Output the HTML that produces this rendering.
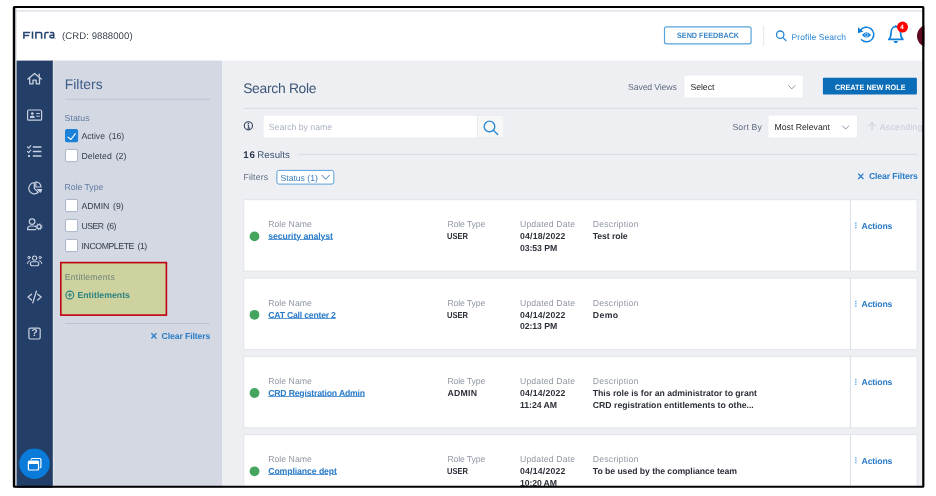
<!DOCTYPE html>
<html>
<head>
<meta charset="utf-8">
<title>Search Role</title>
<style>
*{box-sizing:border-box;margin:0;padding:0}
html,body{width:936px;height:496px;overflow:hidden;background:#fff;font-family:"Liberation Sans",sans-serif}
#page{position:absolute;left:0;top:0;width:936px;height:496px;overflow:hidden}
.layer{position:absolute;left:0;top:0;display:block}
.t{position:absolute;white-space:nowrap;line-height:1;text-rendering:geometricPrecision}
#texts{position:absolute;left:0;top:0;width:936px;height:496px;will-change:transform}
</style>
</head>
<body>
<div id="page">
<svg class="layer" width="936" height="496" viewBox="0 0 936 496">
  <!-- backgrounds -->
  <rect x="15" y="8" width="908" height="52.6" fill="#fff"/>
  <rect x="16.5" y="10" width="906" height="1.9" fill="#e6e8ee"/>
  <rect x="222" y="60.6" width="702" height="428" fill="#edeff3"/>
  <rect x="52.2" y="60.6" width="169.8" height="428" fill="#d3d8e2"/>
  <rect x="52.5" y="60.6" width="1.8" height="428" fill="#dde1e9"/>
  <rect x="16.4" y="60.6" width="36.1" height="428" fill="#233e67"/>
  <rect x="51.5" y="60.6" width="1" height="428" fill="#1f3862"/>
  <rect x="15" y="8" width="1.4" height="480" fill="#c2c6ce"/>

  <!-- logo FINra -->
  <g fill="none" stroke="#27446f" stroke-width="1.55" stroke-linejoin="miter">
    <path d="M23.9 38.7V32.4H30.2M23.9 35.5H29.2"/>
    <path d="M32.5 31.5V38.7"/>
    <path d="M35.9 38.7V32.4H40.2Q41.6 32.4 41.6 33.8V38.7"/>
    <path d="M44.9 38.7V33.8Q44.9 32.4 46.3 32.4H48.8"/>
    <path d="M50 32.4H52.3Q53.7 32.4 53.7 33.8V37.8H51.2Q49.9 37.8 49.9 36.5Q49.9 35.2 51.2 35.2H53.7"/>
  </g>

  <circle cx="55.6" cy="38.5" r=".45" fill="#6c7f9e"/>
  <!-- header: send feedback, divider, search icon, history, bell, avatar -->
  <rect x="664.5" y="26.8" width="86.6" height="17" rx="2" fill="#fff" stroke="#5aa3da" stroke-width="1.2"/>
  <rect x="763.2" y="25.3" width="1" height="20.8" fill="#e2e5ea"/>
  <g fill="none" stroke="#2a86d3" stroke-width="1.3" stroke-linecap="round">
    <circle cx="780.2" cy="34.7" r="3.7"/><path d="M783 37.6L786 40.5"/>
  </g>
  <g fill="none" stroke="#0f7fda" stroke-width="1.5" stroke-linecap="round">
    <path d="M860.3 30.6A7.3 7.3 0 1 1 861.5 39.8"/>
  </g>
  <path d="M858 27.2V33.3L863.4 31.4Z" fill="#0f7fda"/>
  <path d="M861.9 34.9Q866.5 29.6 871.1 34.9Q866.5 40.2 861.9 34.9Z" fill="#0f7fda"/>
  <circle cx="866.5" cy="34.9" r="1.6" fill="none" stroke="#fff" stroke-width=".6"/>
  <g fill="none" stroke="#0f7fda" stroke-width="1.7" stroke-linejoin="round" stroke-linecap="round">
    <path d="M888.8 39.4C890.7 37.8 891 36 891 33C891 29.4 893 26.7 895.8 26.7C898.6 26.7 900.6 29.4 900.6 33C900.6 36 901 37.8 902.9 39.4Z"/>
    <path d="M894.2 41.7Q895.8 43.3 897.4 41.7Z" fill="#0f7fda" stroke-width="1.2"/>
    <path d="M895.8 26.4V25.8" stroke-width="1.6"/>
  </g>
  <circle cx="902.5" cy="27.1" r="5.5" fill="#ff0000"/>
  <circle cx="928.25" cy="36" r="11.25" fill="#5e0a1f"/>

  <!-- sidebar icons -->
  <g fill="none" stroke="#c9d1e0" stroke-width="1.3" stroke-linecap="round" stroke-linejoin="round">
    <!-- home -->
    <path d="M27.9 79.1L34.6 73.4L41.3 79.1"/>
    <path d="M29.7 78.2V83.8H33V80.2H36.2V83.8H39.5V78.2"/>
    <path d="M39.2 76.2V74.2"/>
    <!-- id card -->
    <rect x="27.6" y="110" width="14" height="10.2" rx="1.3" stroke-width="1.2"/>
    <path d="M36.6 113.5H39.4M36.6 116.2H39.4" stroke-width="1"/>
    <!-- checklist -->
    <path d="M32.8 147H41.4M32.8 151.5H41.4M32.8 156H41.4" stroke-width="1.6" stroke-linecap="butt"/>
    <path d="M27.4 146.9L28.6 148.1L30.8 145.6M27.4 151.4L28.6 152.6L30.8 150.1" stroke-width="1.1"/>
    <!-- pie -->
    <path d="M34.3 182.7A5.6 5.6 0 1 0 38.3 192.3L34.3 188.3Z" stroke-width="1.2"/>
    <path d="M35.8 181.8A5.2 5.2 0 0 1 41 187H35.8Z" stroke-width="1.2"/>
    <!-- user gear -->
    <circle cx="32.1" cy="221.6" r="2.8" stroke-width="1.2"/>
    <path d="M35.6 229.7H27.6V228.9Q27.6 226 30.6 226H33.4Q35 226 35.9 226.8" stroke-width="1.2"/>
    <circle cx="39" cy="226.7" r="2.1" stroke-width="1.4"/>
    <circle cx="39" cy="226.7" r="3.1" stroke-width=".9" stroke-dasharray="1.05 1.385" stroke-linecap="butt"/>
    <!-- group -->
    <circle cx="34.6" cy="258.1" r="2.1" stroke-width="1.1"/>
    <rect x="30.4" y="261.7" width="8.4" height="4" rx="2" stroke-width="1.1"/>
    <circle cx="29" cy="257.5" r="1.2" stroke-width="1"/>
    <circle cx="40.2" cy="257.5" r="1.2" stroke-width="1"/>
    <path d="M27.4 263.6Q27.4 260.9 29.9 260.6M41.8 263.6Q41.8 260.9 39.3 260.6" stroke-width="1"/>
    <!-- code -->
    <path d="M31.5 294.2L28 297.1L31.5 300M37.7 294.2L41.2 297.1L37.7 300M36.4 291.2L32.8 302.9" stroke-width="1.3"/>
    <!-- question -->
    <rect x="28.9" y="328.1" width="11.3" height="10.9" rx="1.4" stroke-width="1.2"/>
  </g>
  <g fill="#c9d1e0">
    <circle cx="32.3" cy="113.5" r="1.35"/>
    <path d="M29.8 117.9Q29.8 115.5 32.3 115.5Q34.8 115.5 34.8 117.9Z"/>
    <rect x="28" y="155.1" width="1.9" height="1.9"/>
    <path d="M36.4 188.9H42.2A5.6 5.6 0 0 1 40.4 193Z"/>
  </g>
  <!-- floating button -->
  <circle cx="34.5" cy="464.2" r="15.6" fill="#1a3257" opacity=".35"/>
  <circle cx="34.5" cy="463.7" r="15.3" fill="#0b7bd9"/>
  <g fill="none" stroke="#fff" stroke-width="1.2">
    <rect x="28.4" y="461" width="10.1" height="9" rx="1"/>
    <path d="M31.2 459.8V459.4Q31.2 458.5 32.1 458.5H40Q40.9 458.5 40.9 459.4V466.8Q40.9 467.7 40 467.7H39.6"/>
  </g>
  <rect x="28.4" y="461" width="10.1" height="3" fill="#fff"/>

  <!-- filters panel -->
  <rect x="65" y="98.7" width="145" height="1" fill="#bcc4d2"/>
  <rect x="65" y="129.1" width="13.1" height="13.2" rx="2" fill="#1b80d8"/>
  <path d="M68 137.1L70.9 139.5L75.4 133.7" fill="none" stroke="#fff" stroke-width="1.15" stroke-linecap="round" stroke-linejoin="round"/>
  <g fill="#fff" stroke="#a9b5c9" stroke-width="1">
    <rect x="65.5" y="149.4" width="12.1" height="12.2" rx="1.6"/>
    <rect x="65.5" y="199.4" width="12.1" height="12.2" rx="1.6"/>
    <rect x="65.5" y="219.4" width="12.1" height="12.2" rx="1.6"/>
    <rect x="65.5" y="239.4" width="12.1" height="12.2" rx="1.6"/>
  </g>
  <rect x="60.8" y="262.6" width="105.6" height="52.5" fill="#cdd29f" stroke="#c0000f" stroke-width="1.6"/>
  <g fill="none" stroke="#2b8281" stroke-width="1.1">
    <circle cx="69.8" cy="295" r="3.9"/><path d="M67.6 295H72M69.8 292.8V297.2"/>
  </g>
  <rect x="65" y="323" width="145" height="1" fill="#bcc4d2"/>
  <path d="M151.4 333.3L156.4 338.5M156.4 333.3L151.4 338.5" stroke="#2b7dc8" stroke-width="1.3" fill="none"/>

  <!-- main top -->
  <rect x="683.6" y="74.8" width="120" height="23.5" rx="1.5" fill="#e8ebf0"/><rect x="684.3" y="75.5" width="118.6" height="22.1" rx="1" fill="#fff"/>
  <path d="M788.4 85.4L791.8 88.9L795.2 85.4" fill="none" stroke="#8a93a3" stroke-width="1"/>
  <rect x="822.9" y="77.7" width="94" height="16.8" rx="1" fill="#0b6cb8"/>
  <rect x="243.8" y="107.9" width="673.6" height="1" fill="#d6dae3"/>
  <g fill="none" stroke="#33415c" stroke-width="1.1"><circle cx="248.4" cy="125.8" r="4.1"/></g>
  <path d="M247.5 125.1H248.7V128.1M247.4 128.2H250" stroke="#33415c" stroke-width="1" fill="none"/>
  <circle cx="248.4" cy="123.5" r=".75" fill="#33415c"/>
  <rect x="262.9" y="114.9" width="214.5" height="23.3" fill="#e9ecf1"/><rect x="263.6" y="115.6" width="213.4" height="21.9" fill="#fff"/>
  <rect x="477" y="114.9" width="27.3" height="23.3" fill="#e3e6ed"/><rect x="477.8" y="115.6" width="25.8" height="21.9" fill="#f7f7f8"/>
  <g fill="none" stroke="#2a8ad6" stroke-width="1.4" stroke-linecap="round"><circle cx="489.5" cy="126.4" r="5.3"/><path d="M493.4 130.3L497.7 134.5"/></g>
  <rect x="767.7" y="114.9" width="90.1" height="23.3" rx="1.5" fill="#e8ebf0"/><rect x="768.4" y="115.6" width="88.7" height="21.9" rx="1" fill="#fff"/>
  <path d="M842.3 125.6L845.7 129.1L849.1 125.6" fill="none" stroke="#8a93a3" stroke-width="1"/>
  <path d="M872.1 130.3V122.8M868.5 126.3L872.1 122.7L875.7 126.3" fill="none" stroke="#c6ccd8" stroke-width="1"/>
  <rect x="298" y="153.8" width="619.4" height="1" fill="#d6dae3"/>
  <rect x="276.9" y="170.4" width="56.9" height="13.7" rx="2" fill="#fff" stroke="#5aa0d8" stroke-width="1"/>
  <path d="M321.8 175L325.7 179.3L329.6 175" fill="none" stroke="#3b7ebe" stroke-width="1"/>
  <path d="M858.2 173.6L863.4 179M863.4 173.6L858.2 179" stroke="#2b7dc8" stroke-width="1.3" fill="none"/>
  <!-- cards -->
  <rect x="243.8" y="199.7" width="673.3" height="71.5" fill="#fff" stroke="#e1e4eb" stroke-width="1"/>
  <line x1="850.4" y1="199.7" x2="850.4" y2="271.2" stroke="#d9dde6" stroke-width="1"/>
  <circle cx="254.5" cy="236.4" r="4.9" fill="#45a45e"/>
  <g fill="#4a9adb"><rect x="855.2" y="222.4" width="1.3" height="1.3"/><rect x="855.2" y="224.7" width="1.3" height="1.3"/><rect x="855.2" y="227.0" width="1.3" height="1.3"/></g>
  <rect x="243.8" y="278.1" width="673.3" height="71.5" fill="#fff" stroke="#e1e4eb" stroke-width="1"/>
  <line x1="850.4" y1="278.1" x2="850.4" y2="349.6" stroke="#d9dde6" stroke-width="1"/>
  <circle cx="254.5" cy="314.8" r="4.9" fill="#45a45e"/>
  <g fill="#4a9adb"><rect x="855.2" y="300.8" width="1.3" height="1.3"/><rect x="855.2" y="303.1" width="1.3" height="1.3"/><rect x="855.2" y="305.4" width="1.3" height="1.3"/></g>
  <rect x="243.8" y="356.3" width="673.3" height="71.5" fill="#fff" stroke="#e1e4eb" stroke-width="1"/>
  <line x1="850.4" y1="356.3" x2="850.4" y2="427.8" stroke="#d9dde6" stroke-width="1"/>
  <circle cx="254.5" cy="393.0" r="4.9" fill="#45a45e"/>
  <g fill="#4a9adb"><rect x="855.2" y="379.0" width="1.3" height="1.3"/><rect x="855.2" y="381.3" width="1.3" height="1.3"/><rect x="855.2" y="383.6" width="1.3" height="1.3"/></g>
  <rect x="243.8" y="434.6" width="673.3" height="71.5" fill="#fff" stroke="#e1e4eb" stroke-width="1"/>
  <line x1="850.4" y1="434.6" x2="850.4" y2="506.1" stroke="#d9dde6" stroke-width="1"/>
  <circle cx="254.5" cy="471.3" r="4.9" fill="#45a45e"/>
  <g fill="#4a9adb"><rect x="855.2" y="457.3" width="1.3" height="1.3"/><rect x="855.2" y="459.6" width="1.3" height="1.3"/><rect x="855.2" y="461.9" width="1.3" height="1.3"/></g>
</svg>
<div id="texts">
<div class="t" style="left:61.97px;top:32px;font-size:9.6px;color:#3d4551;letter-spacing:0.059px">(CRD: 9888000)</div>
<div class="t" style="left:676.55px;top:32px;font-size:7.8px;color:#3a86c8;letter-spacing:0.000px;font-weight:bold;transform:scaleX(0.9236);transform-origin:0.35px 0">SEND FEEDBACK</div>
<div class="t" style="left:791.52px;top:33px;font-size:8.5px;color:#2a86d3;letter-spacing:0.087px">Profile Search</div>
<div class="t" style="left:900.32px;top:25px;font-size:6.2px;color:#fff;letter-spacing:0.000px;font-weight:bold">4</div>
<div class="t" style="left:64.67px;top:78px;font-size:13.9px;color:#3f5c8a;letter-spacing:0.045px">Filters</div>
<div class="t" style="left:64.61px;top:114px;font-size:8.7px;color:#5f7aa3;letter-spacing:0.062px">Status</div>
<div class="t" style="left:81.51px;top:132px;font-size:8.7px;color:#343d4b;letter-spacing:-0.028px;word-spacing:1.4px">Active (16)</div>
<div class="t" style="left:81.51px;top:152px;font-size:8.7px;color:#343d4b;letter-spacing:0.046px;word-spacing:1.4px">Deleted (2)</div>
<div class="t" style="left:64.61px;top:183px;font-size:8.7px;color:#5f7aa3;letter-spacing:-0.034px">Role Type</div>
<div class="t" style="left:81.51px;top:202px;font-size:8.7px;color:#343d4b;letter-spacing:-0.036px;word-spacing:1.4px">ADMIN (9)</div>
<div class="t" style="left:81.51px;top:222px;font-size:8.7px;color:#343d4b;letter-spacing:-0.518px;word-spacing:1.4px">USER (6)</div>
<div class="t" style="left:81.51px;top:242px;font-size:8.7px;color:#343d4b;letter-spacing:-0.398px;word-spacing:1.4px">INCOMPLETE (1)</div>
<div class="t" style="left:64.71px;top:273px;font-size:8.7px;color:#6f8379;letter-spacing:0.212px">Entitlements</div>
<div class="t" style="left:77.41px;top:291px;font-size:8.7px;color:#2b8281;letter-spacing:0.037px;font-weight:bold">Entitlements</div>
<div class="t" style="left:161.51px;top:332px;font-size:8.7px;color:#2b7dc8;letter-spacing:-0.115px;font-weight:bold">Clear Filters</div>
<div class="t" style="left:243.17px;top:82px;font-size:13.9px;color:#3f5677;letter-spacing:-0.306px">Search Role</div>
<div class="t" style="left:628.11px;top:83px;font-size:8.7px;color:#5f6b80;letter-spacing:-0.142px">Saved Views</div>
<div class="t" style="left:690.51px;top:83px;font-size:8.7px;color:#1f1f1f;letter-spacing:-0.061px">Select</div>
<div class="t" style="left:834.55px;top:84px;font-size:7.8px;color:#fff;letter-spacing:0.000px;font-weight:bold;transform:scaleX(0.9321);transform-origin:0.35px 0">CREATE NEW ROLE</div>
<div class="t" style="left:268.81px;top:123px;font-size:8.7px;color:#aab2c0;letter-spacing:-0.002px">Search by name</div>
<div class="t" style="left:732.41px;top:123px;font-size:8.7px;color:#5f6b80;letter-spacing:0.159px">Sort By</div>
<div class="t" style="left:774.51px;top:123px;font-size:8.7px;color:#1f1f1f;letter-spacing:-0.007px">Most Relevant</div>
<div class="t" style="left:879.81px;top:123px;font-size:8.7px;color:#c6ccd8;letter-spacing:0.271px">Ascending</div>
<div class="t" style="left:243.36px;top:151px;font-size:9.7px;color:#27324a;letter-spacing:0.749px;font-weight:bold">16</div>
<div class="t" style="left:257.26px;top:151px;font-size:9.7px;color:#3f5677;letter-spacing:0.054px">Results</div>
<div class="t" style="left:243.41px;top:173px;font-size:8.7px;color:#5d6b83;letter-spacing:0.165px">Filters</div>
<div class="t" style="left:280.51px;top:174px;font-size:8.7px;color:#3b7ebe;letter-spacing:-0.036px">Status (1)</div>
<div class="t" style="left:868.91px;top:172px;font-size:8.7px;color:#2b7dc8;letter-spacing:-0.115px;font-weight:bold">Clear Filters</div>
<div class="t" style="left:268.21px;top:220px;font-size:8.7px;color:#9097a3;letter-spacing:0.023px">Role Name</div>
<div class="t" style="left:268.21px;top:232px;font-size:8.7px;color:#2a7bc8;letter-spacing:-0.062px;font-weight:bold;text-decoration:underline;text-decoration-thickness:.7px;text-underline-offset:.4px;text-decoration-color:#5c9bd6">security analyst</div>
<div class="t" style="left:447.41px;top:220px;font-size:8.7px;color:#9097a3;letter-spacing:-0.134px">Role Type</div>
<div class="t" style="left:447.41px;top:232px;font-size:8.7px;color:#2c3038;letter-spacing:0.000px;font-weight:bold;transform:scaleX(0.8719);transform-origin:0.39px 0">USER</div>
<div class="t" style="left:520.01px;top:220px;font-size:8.7px;color:#9097a3;letter-spacing:0.130px">Updated Date</div>
<div class="t" style="left:520.01px;top:232px;font-size:8.7px;color:#2c3038;letter-spacing:0.207px;font-weight:bold">04/18/2022</div>
<div class="t" style="left:520.01px;top:244px;font-size:8.7px;color:#2c3038;letter-spacing:-0.075px;font-weight:bold">03:53 PM</div>
<div class="t" style="left:592.81px;top:220px;font-size:8.7px;color:#9097a3;letter-spacing:0.199px">Description</div>
<div class="t" style="left:592.81px;top:232px;font-size:8.7px;color:#2c3038;letter-spacing:-0.091px;font-weight:bold">Test role</div>
<div class="t" style="left:861.61px;top:222px;font-size:8.7px;color:#2a7bc8;letter-spacing:-0.186px;font-weight:bold">Actions</div>
<div class="t" style="left:268.21px;top:299px;font-size:8.7px;color:#9097a3;letter-spacing:0.023px">Role Name</div>
<div class="t" style="left:268.21px;top:311px;font-size:8.7px;color:#2a7bc8;letter-spacing:-0.222px;font-weight:bold;text-decoration:underline;text-decoration-thickness:.7px;text-underline-offset:.4px;text-decoration-color:#5c9bd6">CAT Call center 2</div>
<div class="t" style="left:447.41px;top:299px;font-size:8.7px;color:#9097a3;letter-spacing:-0.134px">Role Type</div>
<div class="t" style="left:447.41px;top:311px;font-size:8.7px;color:#2c3038;letter-spacing:0.000px;font-weight:bold;transform:scaleX(0.8719);transform-origin:0.39px 0">USER</div>
<div class="t" style="left:520.01px;top:299px;font-size:8.7px;color:#9097a3;letter-spacing:0.130px">Updated Date</div>
<div class="t" style="left:520.01px;top:311px;font-size:8.7px;color:#2c3038;letter-spacing:0.207px;font-weight:bold">04/14/2022</div>
<div class="t" style="left:520.01px;top:322px;font-size:8.7px;color:#2c3038;letter-spacing:-0.075px;font-weight:bold">02:13 PM</div>
<div class="t" style="left:592.81px;top:299px;font-size:8.7px;color:#9097a3;letter-spacing:0.199px">Description</div>
<div class="t" style="left:592.81px;top:311px;font-size:8.7px;color:#2c3038;letter-spacing:0.368px;font-weight:bold">Demo</div>
<div class="t" style="left:861.61px;top:300px;font-size:8.7px;color:#2a7bc8;letter-spacing:-0.186px;font-weight:bold">Actions</div>
<div class="t" style="left:268.21px;top:377px;font-size:8.7px;color:#9097a3;letter-spacing:0.023px">Role Name</div>
<div class="t" style="left:268.21px;top:389px;font-size:8.7px;color:#2a7bc8;letter-spacing:-0.196px;font-weight:bold;text-decoration:underline;text-decoration-thickness:.7px;text-underline-offset:.4px;text-decoration-color:#5c9bd6">CRD Registration Admin</div>
<div class="t" style="left:447.41px;top:377px;font-size:8.7px;color:#9097a3;letter-spacing:-0.134px">Role Type</div>
<div class="t" style="left:447.41px;top:389px;font-size:8.7px;color:#2c3038;letter-spacing:0.267px;font-weight:bold">ADMIN</div>
<div class="t" style="left:520.01px;top:377px;font-size:8.7px;color:#9097a3;letter-spacing:0.130px">Updated Date</div>
<div class="t" style="left:520.01px;top:389px;font-size:8.7px;color:#2c3038;letter-spacing:0.207px;font-weight:bold">04/14/2022</div>
<div class="t" style="left:520.01px;top:401px;font-size:8.7px;color:#2c3038;letter-spacing:-0.046px;font-weight:bold">11:24 AM</div>
<div class="t" style="left:592.81px;top:377px;font-size:8.7px;color:#9097a3;letter-spacing:0.199px">Description</div>
<div class="t" style="left:592.81px;top:389px;font-size:8.7px;color:#2c3038;letter-spacing:-0.023px;font-weight:bold">This role is for an administrator to grant</div>
<div class="t" style="left:592.81px;top:401px;font-size:8.7px;color:#2c3038;letter-spacing:-0.007px;font-weight:bold">CRD registration entitlements to othe...</div>
<div class="t" style="left:861.61px;top:378px;font-size:8.7px;color:#2a7bc8;letter-spacing:-0.186px;font-weight:bold">Actions</div>
<div class="t" style="left:268.21px;top:455px;font-size:8.7px;color:#9097a3;letter-spacing:0.023px">Role Name</div>
<div class="t" style="left:268.21px;top:467px;font-size:8.7px;color:#2a7bc8;letter-spacing:-0.089px;font-weight:bold;text-decoration:underline;text-decoration-thickness:.7px;text-underline-offset:.4px;text-decoration-color:#5c9bd6">Compliance dept</div>
<div class="t" style="left:447.41px;top:455px;font-size:8.7px;color:#9097a3;letter-spacing:-0.134px">Role Type</div>
<div class="t" style="left:447.41px;top:467px;font-size:8.7px;color:#2c3038;letter-spacing:0.000px;font-weight:bold;transform:scaleX(0.8719);transform-origin:0.39px 0">USER</div>
<div class="t" style="left:520.01px;top:455px;font-size:8.7px;color:#9097a3;letter-spacing:0.130px">Updated Date</div>
<div class="t" style="left:520.01px;top:467px;font-size:8.7px;color:#2c3038;letter-spacing:0.207px;font-weight:bold">04/14/2022</div>
<div class="t" style="left:520.01px;top:479px;font-size:8.7px;color:#2c3038;letter-spacing:-0.115px;font-weight:bold">10:20 AM</div>
<div class="t" style="left:592.81px;top:455px;font-size:8.7px;color:#9097a3;letter-spacing:0.199px">Description</div>
<div class="t" style="left:592.81px;top:467px;font-size:8.7px;color:#2c3038;letter-spacing:-0.059px;font-weight:bold">To be used by the compliance team</div>
<div class="t" style="left:861.61px;top:457px;font-size:8.7px;color:#2a7bc8;letter-spacing:-0.186px;font-weight:bold">Actions</div>
<div class="t" style="left:31.5px;top:329px;font-size:10.2px;font-weight:bold;color:#c9d1e0">?</div>
</div>
<svg class="layer" width="936" height="496" viewBox="0 0 936 496">
  <path fill-rule="evenodd" fill="#fff" d="M0 0H936V496H0Z M14.3 6H922.9Q924.4 6 924.4 7.5V486.3Q924.4 487.8 922.9 487.8H14.3Q12.8 487.8 12.8 486.3V7.5Q12.8 6 14.3 6Z"/>
  <path fill-rule="evenodd" fill="#000" d="M14.3 6H922.9Q924.4 6 924.4 7.5V486.3Q924.4 487.8 922.9 487.8H14.3Q12.8 487.8 12.8 486.3V7.5Q12.8 6 14.3 6Z M15.1 8.1V485.7H922.2V8.1Z"/>
</svg>
</div>
</body>
</html>
